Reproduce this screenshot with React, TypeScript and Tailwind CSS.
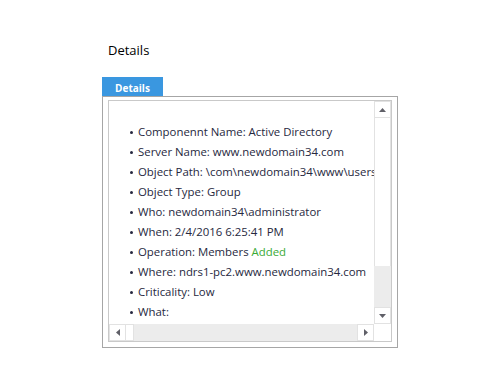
const rows: { label: string; value: string; green?: string }[] = [
  { label: 'Componennt Name', value: 'Active Directory' },
  { label: 'Server Name', value: 'www.newdomain34.com' },
  { label: 'Object Path', value: '\\com\\newdomain34\\www\\users' },
  { label: 'Object Type', value: 'Group' },
  { label: 'Who', value: 'newdomain34\\administrator' },
  { label: 'When', value: '2/4/2016 6:25:41 PM' },
  { label: 'Operation', value: 'Members', green: 'Added' },
  { label: 'Where', value: 'ndrs1-pc2.www.newdomain34.com' },
  { label: 'Criticality', value: 'Low' },
  { label: 'What', value: '' },
];

function Arrow({ dir }: { dir: 'up' | 'down' | 'left' | 'right' }) {
  const pts = {
    up: '0,4 7,4 3.5,0',
    down: '0,0 7,0 3.5,4',
    left: '4,0 4,7 0,3.5',
    right: '0,0 0,7 4,3.5',
  }[dir];
  const vertical = dir === 'up' || dir === 'down';
  return (
    <svg width={vertical ? 7 : 4} height={vertical ? 4 : 7} viewBox={vertical ? '0 0 7 4' : '0 0 4 7'}>
      <polygon points={pts} fill="#606068" />
    </svg>
  );
}

export default function App() {
  return (
    <div className="w-[500px] h-[390px] bg-white pl-[102px] pt-[40px]" style={{ fontFamily: '"Open Sans", "Liberation Sans", sans-serif' }}>
      <h2 className="pl-[6px] text-[13px] leading-[20px] text-black">Details</h2>
      <div className="mt-[17px] w-[61px] h-[19px] pt-[3px] bg-[#3a97e0] text-white text-[10px] font-bold flex items-center justify-center">
        Details
      </div>
      <div className="w-[296px] h-[252px] border border-[#a6a6a6] pt-[3px] px-[5px] pb-[5px]">
        <div className="w-full h-full border border-[#c9c9c9] flex flex-col">
          <div className="flex flex-1 min-h-0">
            <div className="flex-1 overflow-hidden pt-[21px] text-[11.4px] text-[#262840]">
              {rows.map((r) => (
                <div key={r.label} className="h-[20px] flex items-center pl-[21px] whitespace-nowrap">
                  <span className="w-[3px] h-[3px] rounded-full bg-[#262840] mr-[5px] shrink-0" />
                  <span>
                    {r.label}: {r.value}
                    {r.green && <span className="text-[#3aaa35]"> {r.green}</span>}
                  </span>
                </div>
              ))}
            </div>
            <div className="w-[17px] flex flex-col bg-[#ececec]">
              <div className="h-[17px] bg-white border border-[#e2e2e2] flex items-center justify-center">
                <Arrow dir="up" />
              </div>
              <div className="h-[148px] bg-white border-x border-[#e2e2e2]" />
              <div className="flex-1" />
              <div className="h-[17px] bg-white border border-[#e2e2e2] flex items-center justify-center">
                <Arrow dir="down" />
              </div>
            </div>
          </div>
          <div className="h-[17px] flex">
            <div className="flex-1 flex bg-[#ececec]">
              <div className="w-[17px] bg-white border border-[#e2e2e2] flex items-center justify-center">
                <Arrow dir="left" />
              </div>
              <div className="w-[8px] bg-white border-y border-r border-[#e2e2e2]" />
              <div className="flex-1" />
              <div className="w-[17px] bg-white border border-[#e2e2e2] flex items-center justify-center">
                <Arrow dir="right" />
              </div>
            </div>
            <div className="w-[17px] bg-white" />
          </div>
        </div>
      </div>
    </div>
  );
}
